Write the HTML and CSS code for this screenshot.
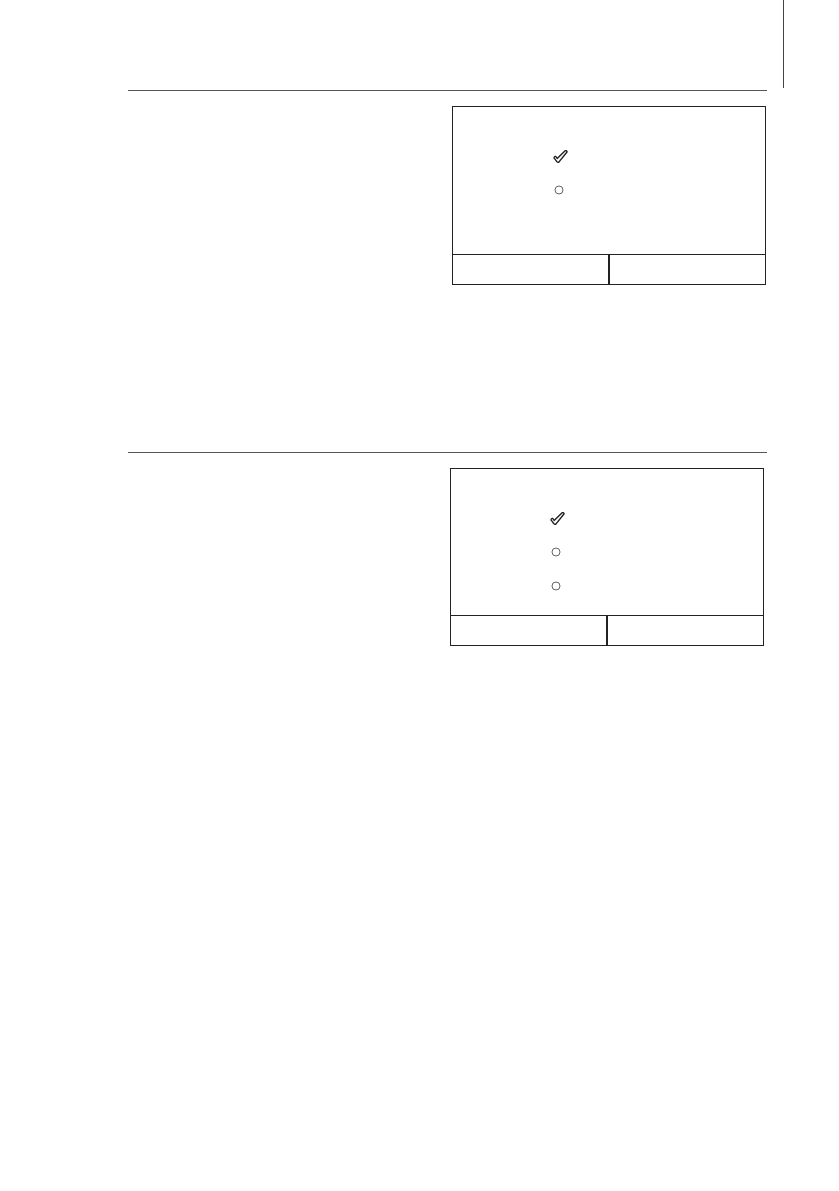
FILE: index.html
```html
<!DOCTYPE html>
<html lang="en">
<head>
<meta charset="utf-8">
<title>Screens</title>
<link rel="stylesheet" href="styles.css">
</head>
<body>
<div class="page">
  <div class="edge-mark"></div>

  <section class="section first">
    <div class="screen screen-a">
      <div class="screen-body">
        <div class="option">
          <svg class="check" viewBox="0 0 16 14" width="15" height="13"><path d="M4.4 9.2 L13 0.8 C13.8 0.2 15.4 1.2 15 2.2 L6.4 12.8 C5.8 13.4 4.6 13.4 4 12.6 C3.2 11.2 2.2 9.6 1.2 8.8 C0.8 8 1.8 6.6 2.8 7 C3.4 7.4 4 8.4 4.4 9.2 Z" fill="#fff" stroke="#1e1e1e" stroke-width="1.5" stroke-linejoin="round"/></svg>
        </div>
        <div class="option">
          <svg class="radio" viewBox="0 0 10 10" width="10" height="10"><circle cx="5" cy="5" r="4" fill="none" stroke="#555" stroke-width="0.9"/></svg>
        </div>
      </div>
      <div class="screen-foot">
        <div class="soft-key"></div>
        <div class="soft-key"></div>
      </div>
    </div>
  </section>

  <section class="section second">
    <div class="screen screen-b">
      <div class="screen-body">
        <div class="option">
          <svg class="check" viewBox="0 0 16 14" width="15" height="13"><path d="M4.4 9.2 L13 0.8 C13.8 0.2 15.4 1.2 15 2.2 L6.4 12.8 C5.8 13.4 4.6 13.4 4 12.6 C3.2 11.2 2.2 9.6 1.2 8.8 C0.8 8 1.8 6.6 2.8 7 C3.4 7.4 4 8.4 4.4 9.2 Z" fill="#fff" stroke="#1e1e1e" stroke-width="1.5" stroke-linejoin="round"/></svg>
        </div>
        <div class="option">
          <svg class="radio" viewBox="0 0 10 10" width="10" height="10"><circle cx="5" cy="5" r="4" fill="none" stroke="#555" stroke-width="0.9"/></svg>
        </div>
        <div class="option">
          <svg class="radio" viewBox="0 0 10 10" width="10" height="10"><circle cx="5" cy="5" r="4" fill="none" stroke="#555" stroke-width="0.9"/></svg>
        </div>
      </div>
      <div class="screen-foot">
        <div class="soft-key"></div>
        <div class="soft-key"></div>
      </div>
    </div>
  </section>
</div>
</body>
</html>
```

FILE: styles.css
```css
html, body {
  margin: 0;
  padding: 0;
  background: #fff;
  font-family: "Liberation Sans", Arial, sans-serif;
}

.page {
  width: 639px;
  padding-left: 128px;
  height: 1191px;
  box-sizing: content-box;
}

.edge-mark {
  width: 1px;
  height: 88px;
  margin-left: 655px;
  background: #444;
}

.section {
  border-top: 1px solid #555;
}

.section.first {
  margin-top: 2px;
  height: 361px;
}

.screen {
  border: 1px solid #222;
  box-sizing: border-box;
  display: flex;
  flex-direction: column;
}

.screen-a {
  margin-top: 15px;
  margin-left: 324px;
  width: 314px;
  height: 179px;
}

.screen-b {
  margin-top: 15px;
  margin-left: 322px;
  width: 314px;
  height: 178px;
}

.screen-body {
  flex: 1;
  padding-top: 33px;
  padding-left: 99px;
  display: flex;
  flex-direction: column;
}

.screen-a .screen-body { padding-left: 100px; }

.option {
  height: 33.5px;
  display: flex;
  align-items: center;
}

.check {
  display: block;
}

.radio {
  display: block;
  margin-left: 1px;
}

.screen-foot {
  height: 29px;
  border-top: 1px solid #222;
  display: flex;
}

.soft-key {
  flex: 1;
}

.soft-key + .soft-key {
  border-left: 2px solid #222;
}
```
